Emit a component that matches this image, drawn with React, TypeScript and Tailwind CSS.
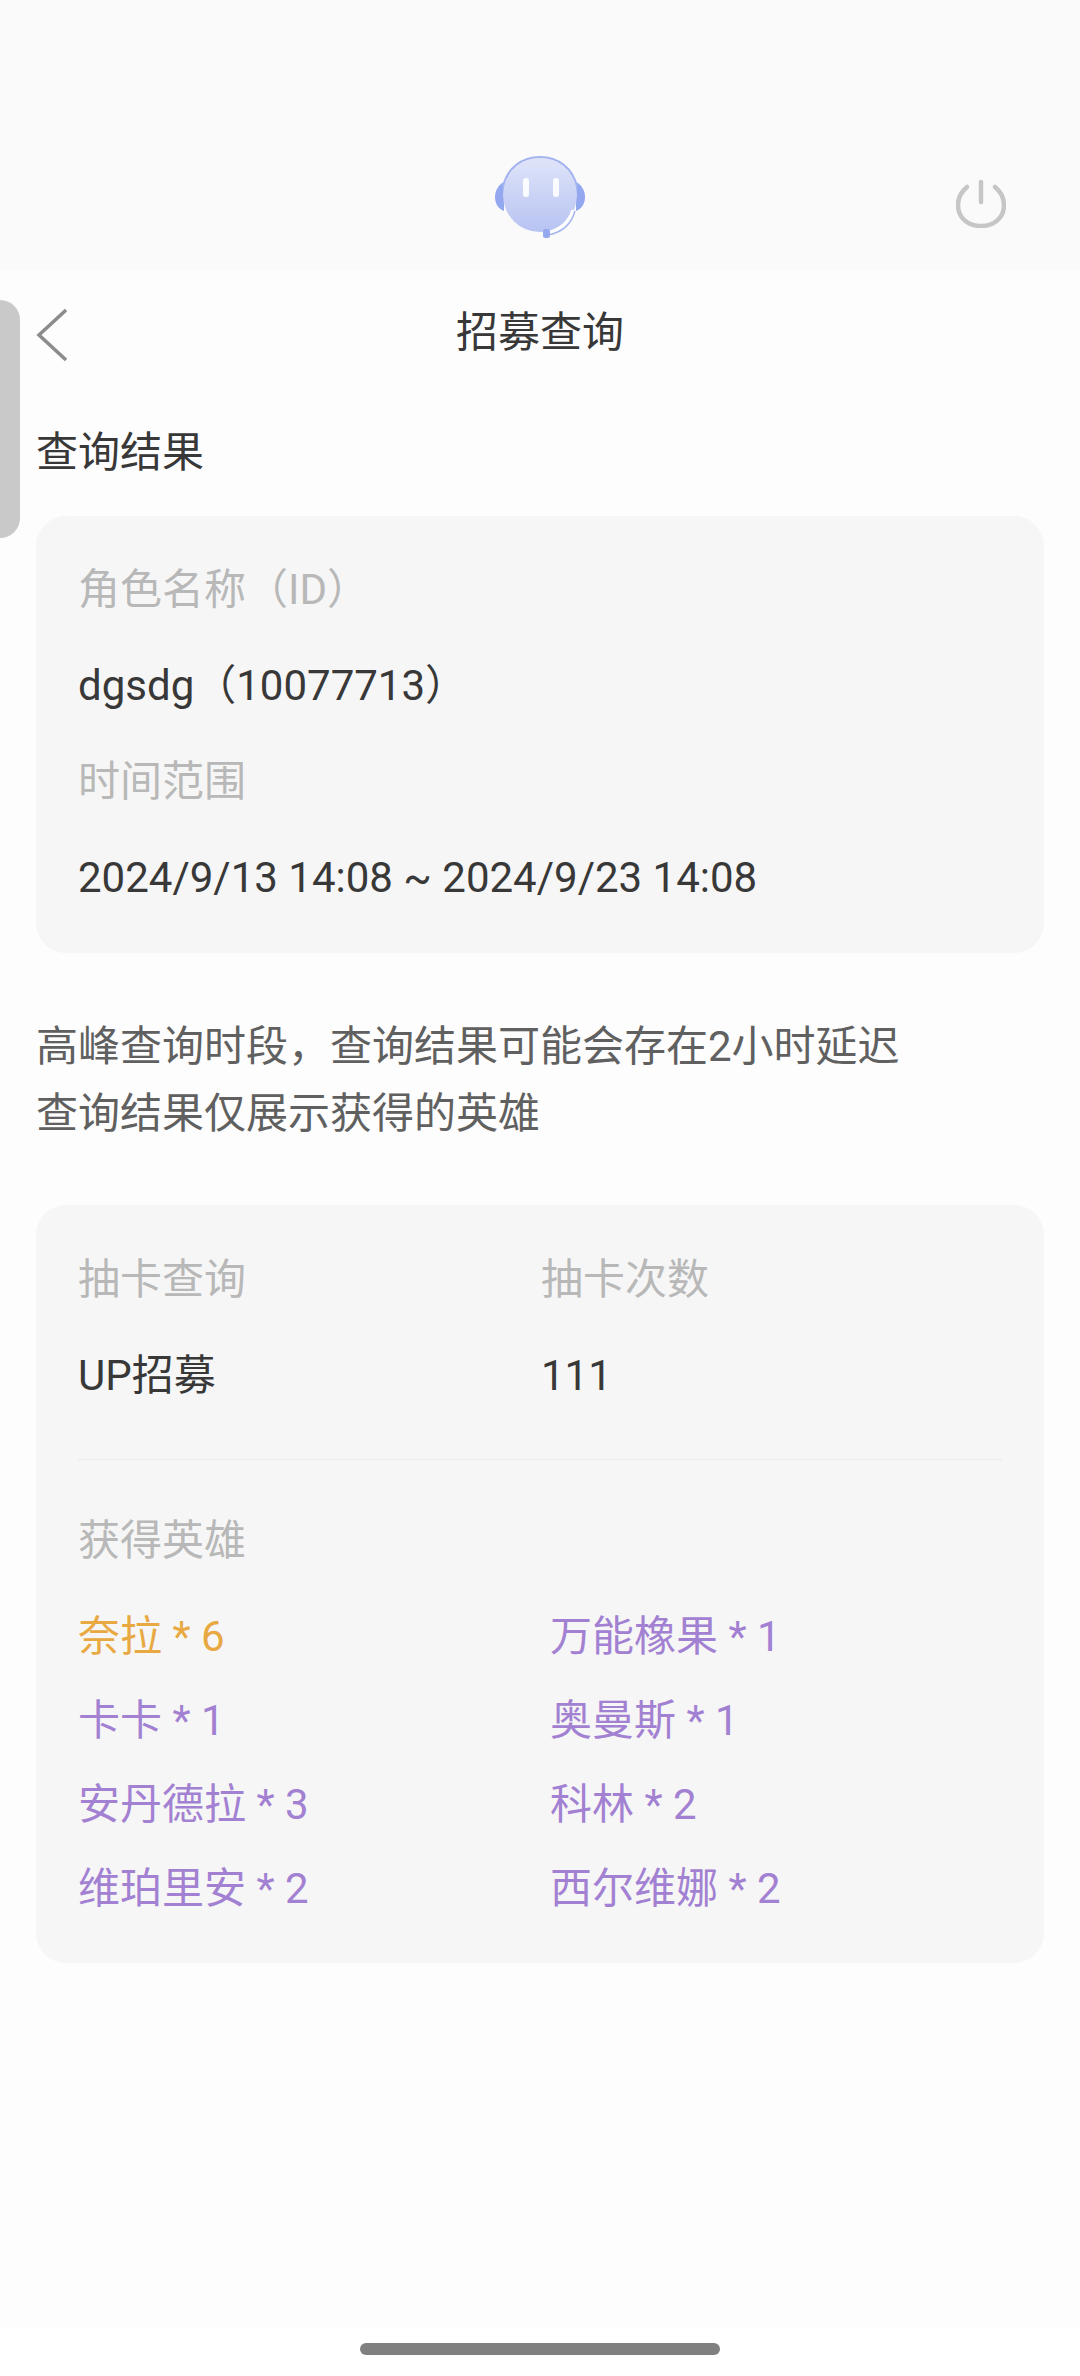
import React from 'react';

const fontClass = "[font-family:Roboto,'Noto_Sans_CJK_SC',sans-serif]";
const labelClass = 'h-[96px] flex items-center text-[42px] text-[#b8b8b8]';
const valueClass = 'h-[96px] flex items-center text-[42px] text-[#383838]';

const heroes = [
  { name: '奈拉 * 6', color: 'text-[#e8a842]' },
  { name: '万能橡果 * 1', color: 'text-[#a381d2]' },
  { name: '卡卡 * 1', color: 'text-[#a381d2]' },
  { name: '奥曼斯 * 1', color: 'text-[#a381d2]' },
  { name: '安丹德拉 * 3', color: 'text-[#a381d2]' },
  { name: '科林 * 2', color: 'text-[#a381d2]' },
  { name: '维珀里安 * 2', color: 'text-[#a381d2]' },
  { name: '西尔维娜 * 2', color: 'text-[#a381d2]' },
];

const Avatar = () => (
  <svg width="92" height="84" viewBox="0 0 92 84" fill="none">
    <defs>
      <linearGradient id="face" x1="0" y1="0" x2="0" y2="1">
        <stop offset="0" stopColor="#dfe4f9" />
        <stop offset="1" stopColor="#b7c3f2" />
      </linearGradient>
    </defs>
    <path d="M10 27 C4 30 1 36 1 42 C1 48 4 54 10 56 Z" fill="#93a8ee" />
    <path d="M82 27 C88 30 91 36 91 42 C91 48 88 54 82 56 Z" fill="#93a8ee" />
    <circle cx="46" cy="40" r="37" fill="url(#face)" />
    <path d="M9 32 C13 13 28 2 46 2 C64 2 79 13 83 32" stroke="#a3b4ef" strokeWidth="2" />
    <rect x="29" y="23" width="6" height="19" rx="3" fill="#ffffff" opacity="0.9" />
    <rect x="59" y="23" width="6" height="19" rx="3" fill="#ffffff" opacity="0.9" />
    <path d="M79 55 C75 67 66 75 53 78" stroke="#ffffff" strokeWidth="3" />
    <path d="M81 56 C77 70 67 78 53 80" stroke="#a3b4ef" strokeWidth="1.5" />
    <rect x="49" y="74" width="7" height="9" rx="2.5" fill="#93a8ee" />
  </svg>
);

const PowerIcon = () => (
  <svg width="50" height="48" viewBox="0 0 50 48" fill="none" stroke="#c6c6c6" strokeWidth="4.5" strokeLinecap="round">
    <path d="M25 2 V22" />
    <path d="M11 7 C5 12 2 18 2 25 C2 38 12 46 25 46 C38 46 48 38 48 25 C48 18 45 12 39 7" />
  </svg>
);

const BackIcon = () => (
  <svg width="32" height="54" viewBox="0 0 32 54" fill="none" stroke="#8c8c8c" strokeWidth="3.5">
    <path d="M31 2 L4 27 L31 52" />
  </svg>
);

const App: React.FC = () => {
  return (
    <div className={`relative w-[1080px] h-[2376px] bg-white overflow-hidden ${fontClass}`}>
      <div className="h-[2328px] bg-[#fdfdfd]">
        {/* top bar */}
        <div className="relative h-[270px] bg-[#fafafa]">
          <div className="flex justify-center pt-[155px]">
            <Avatar />
          </div>
          <div className="absolute left-[956px] top-[180px]">
            <PowerIcon />
          </div>
        </div>

        {/* title */}
        <div className="relative h-[122px] flex items-center justify-center">
          <div className="absolute left-[35px] top-[38px]">
            <BackIcon />
          </div>
          <h1 className="pt-[3px] text-[42px] font-normal text-[#383838] leading-[122px]">招募查询</h1>
        </div>

        <div className="px-[36px]">
          <h2 className="mt-[31px] mb-[33px] text-[42px] leading-[60px] font-normal text-[#383838]">查询结果</h2>

          <div className="rounded-[30px] bg-[#f6f6f6] px-[42px] pt-[25px] pb-[28px]">
            <div className={labelClass}>角色名称（ID）</div>
            <div className={valueClass}>dgsdg（10077713）</div>
            <div className={labelClass}>时间范围</div>
            <div className={valueClass}>2024/9/13 14:08 ~ 2024/9/23 14:08</div>
          </div>

          <div className="mt-[60px] mb-[58px] text-[42px] leading-[67px] text-[#606060]">
            <p>高峰查询时段，查询结果可能会存在2小时延迟</p>
            <p>查询结果仅展示获得的英雄</p>
          </div>

          <div className="rounded-[30px] bg-[#f6f6f6] px-[42px] pt-[26px] pb-[33px]">
            <div className="grid grid-cols-[463px_1fr]">
              <div className={labelClass}>抽卡查询</div>
              <div className={labelClass}>抽卡次数</div>
              <div className={valueClass}>UP招募</div>
              <div className={valueClass}>111</div>
            </div>
            <div className="mt-[36px] h-px bg-[#ebebeb]" />
            <div className={`mt-[32px] ${labelClass}`}>获得英雄</div>
            <div className="mt-[6px] grid grid-cols-[472px_1fr]">
              {heroes.map(h => (
                <div key={h.name} className={`h-[84px] flex items-center text-[42px] ${h.color}`}>
                  {h.name}
                </div>
              ))}
            </div>
          </div>
        </div>
      </div>

      {/* side handle */}
      <div className="absolute left-0 top-[300px] w-[20px] h-[238px] rounded-r-[20px] bg-[#c8c9c8]" />

      {/* home indicator */}
      <div className="absolute left-[360px] top-[2343px] w-[360px] h-[12px] rounded-full bg-[#808080]" />
    </div>
  );
};

export default App;
